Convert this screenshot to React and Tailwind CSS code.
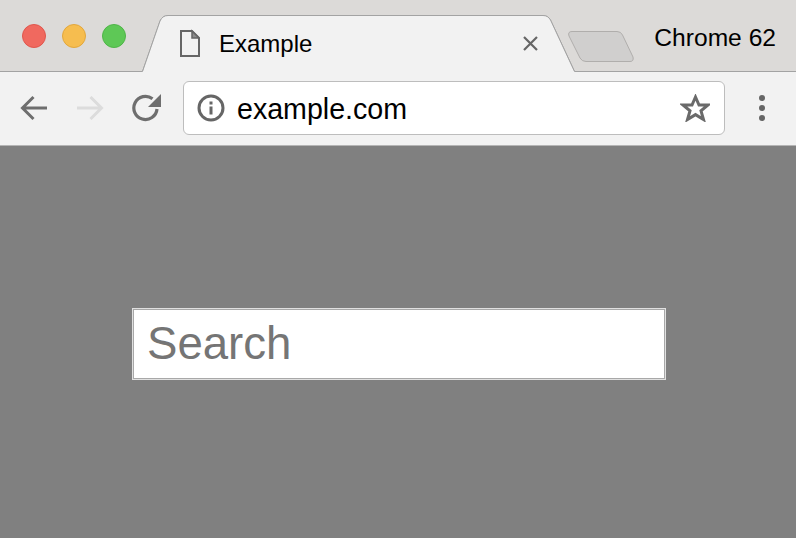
export default function App() {
  return (
    <div className="w-[796px] h-[538px] overflow-hidden flex flex-col bg-[#808080] font-['Liberation_Sans',Arial,sans-serif]">
      <div className="relative h-[72px] shrink-0 flex items-center bg-[#dcdad8]">
        <svg className="absolute left-0 top-0" width="796" height="72" viewBox="0 0 796 72">
          <path d="M0 71.5H142.5L160 21Q162.5 15.5 168 15.5H543Q548 15.5 550.5 20L574.5 71.5H796" fill="none" stroke="#a3a3a3" strokeWidth="1" />
          <path d="M142.5 72L160 21Q162.5 15.5 168 15.5H543Q548 15.5 550.5 20L574.5 72Z" fill="#f2f2f2" />
          <path d="M142.5 71.5L160 21Q162.5 15.5 168 15.5H543Q548 15.5 550.5 20L574.5 71.5" fill="none" stroke="#a3a3a3" strokeWidth="1" />
          <path d="M572 31.5H617Q621 31.5 622.5 35L633 57Q634 61.5 630 61.5H586Q582 61.5 580 58L569 36Q567.5 31.5 572 31.5Z" fill="#d0cfce" stroke="#b0aeac" strokeWidth="1" />
        </svg>
        <div className="relative flex items-center gap-4 ml-[22px] self-start pt-[24px]">
          <span className="w-6 h-6 rounded-full bg-[#f0695f] border border-[#e0564d]" />
          <span className="w-6 h-6 rounded-full bg-[#f6bd4f] border border-[#e2a73c]" />
          <span className="w-6 h-6 rounded-full bg-[#5ec856] border border-[#4fb548]" />
        </div>
        <div className="relative flex items-start self-start pt-[29px] ml-[54px]">
          <svg width="20" height="28" viewBox="0 0 20 28" className="shrink-0">
            <path d="M1 2H12L19 9V27H1Z" fill="none" stroke="#666666" strokeWidth="2" />
            <path d="M12 2L19 9H12Z" fill="#8c8c8c" stroke="#666666" strokeWidth="1.5" />
          </svg>
          <span className="ml-[19px] mt-[1px] text-[24px] leading-[28px] text-black">Example</span>
          <svg width="15" height="15" viewBox="0 0 15 15" className="ml-[211px] mt-[7px] shrink-0">
            <path d="M1 1L14 14M14 1L1 14" stroke="#666666" strokeWidth="2.2" fill="none" />
          </svg>
        </div>
        <span className="relative ml-auto mr-[20px] self-start pt-[23px] text-[24.6px] leading-[29px] text-black">Chrome 62</span>
      </div>
      <div className="h-[74px] shrink-0 flex items-center bg-[#f2f2f2] border-b border-[#b5b5b5] pl-[20px] pb-[1px]">
        <svg width="28" height="26" viewBox="0 0 28 26" className="shrink-0">
          <path d="M27 13H3M13.5 2L2.5 13L13.5 24" fill="none" stroke="#6e6e6e" strokeWidth="3" />
        </svg>
        <svg width="28" height="26" viewBox="0 0 28 26" className="shrink-0 ml-[28px]">
          <path d="M1 13H25M14.5 2L25.5 13L14.5 24" fill="none" stroke="#dcdcdc" strokeWidth="3" />
        </svg>
        <svg width="30" height="28" viewBox="0 0 30 28" className="shrink-0 ml-[28px]">
          <path d="M25 15A11.6 11.6 0 1 1 20.5 4.7" fill="none" stroke="#6e6e6e" strokeWidth="3.2" />
          <path d="M29 0V13H16Z" fill="#6e6e6e" />
        </svg>
        <div className="ml-[21px] w-[542px] h-[54px] bg-white border border-[#bdbdbd] rounded-[6px] flex items-center pl-[13px] pr-[14px]">
          <svg width="28" height="28" viewBox="0 0 28 28" className="shrink-0">
            <circle cx="14" cy="14" r="12" fill="none" stroke="#666" strokeWidth="3" />
            <rect x="12.5" y="12.5" width="3" height="8" fill="#666" />
            <rect x="12.5" y="7.5" width="3" height="3" fill="#666" />
          </svg>
          <span className="ml-[12px] mt-[2px] text-[28.6px] leading-[34px] text-black">example.com</span>
          <svg width="30" height="28" viewBox="0 0 30 28" className="ml-auto shrink-0">
            <path d="M15.5 3L19 11H28L21 16.8L23.5 25.5L15.5 20.6L7.5 25.5L10 16.8L3 11H12Z" fill="none" stroke="#6a6a6a" strokeWidth="3" />
          </svg>
        </div>
        <div className="ml-[34px] flex flex-col gap-[4px]">
          <span className="w-[6px] h-[6px] rounded-full bg-[#666]" />
          <span className="w-[6px] h-[6px] rounded-full bg-[#666]" />
          <span className="w-[6px] h-[6px] rounded-full bg-[#666]" />
        </div>
      </div>
      <div className="flex-1 flex items-start pl-[132px] pt-[162px]">
        <div className="w-[534px] h-[72px] bg-white border border-[#e0e0e0] shadow-[inset_0_0_0_1px_#a8a8a8] pl-[14px] pt-[9px]">
          <span className="block text-[45.6px] leading-[52px] text-[#757575]">Search</span>
        </div>
      </div>
    </div>
  );
}
